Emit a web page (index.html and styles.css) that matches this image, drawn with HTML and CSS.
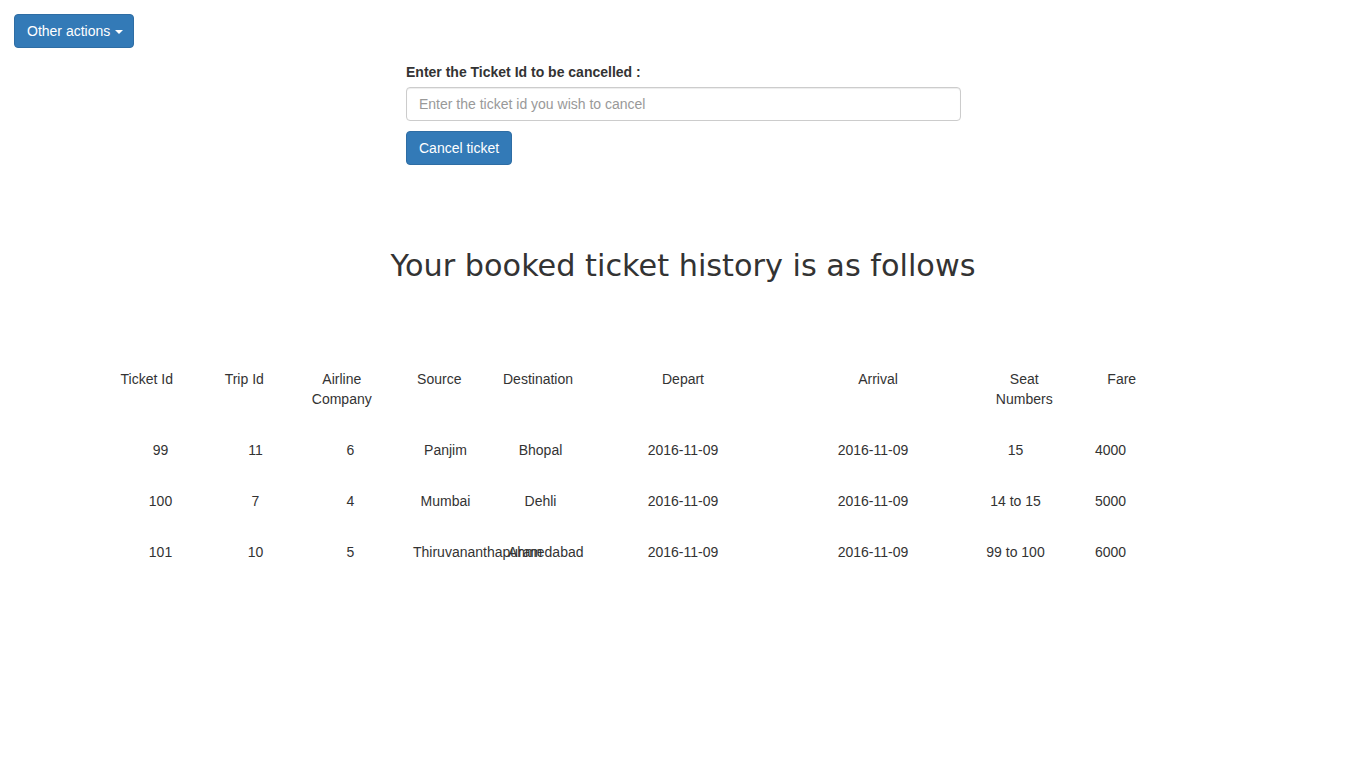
FILE: index.html
```html
<!DOCTYPE html>
<html>
<head>
<meta charset="utf-8">
<title>Ticket history</title>
<link rel="stylesheet" href="styles.css">
</head>
<body>
<div class="topbar">
  <button class="btn btn-primary btn-dropdown" type="button">Other actions <span class="caret"></span></button>
</div>

<form class="cancel-form">
  <label class="form-label" for="tid">Enter the Ticket Id to be cancelled :</label>
  <input class="form-control" id="tid" type="text" placeholder="Enter the ticket id you wish to cancel">
  <div class="form-actions">
    <button class="btn btn-primary" type="button">Cancel ticket</button>
  </div>
</form>

<h2 class="history-title">Your booked ticket history is as follows</h2>

<div class="history">
  <div class="row head">
    <div class="c1">Ticket Id</div>
    <div class="c1">Trip Id</div>
    <div class="c1">Airline Company</div>
    <div class="c1">Source</div>
    <div class="c1">Destination</div>
    <div class="c2">Depart</div>
    <div class="c2">Arrival</div>
    <div class="c1">Seat Numbers</div>
    <div class="c1">Fare</div>
  </div>
  <div class="row data">
    <div class="c1">99</div>
    <div class="c1">11</div>
    <div class="c1">6</div>
    <div class="c1">Panjim</div>
    <div class="c1">Bhopal</div>
    <div class="c2">2016-11-09</div>
    <div class="c2">2016-11-09</div>
    <div class="c1">15</div>
    <div class="c1">4000</div>
  </div>
  <div class="row data">
    <div class="c1">100</div>
    <div class="c1">7</div>
    <div class="c1">4</div>
    <div class="c1">Mumbai</div>
    <div class="c1">Dehli</div>
    <div class="c2">2016-11-09</div>
    <div class="c2">2016-11-09</div>
    <div class="c1">14 to 15</div>
    <div class="c1">5000</div>
  </div>
  <div class="row data">
    <div class="c1">101</div>
    <div class="c1">10</div>
    <div class="c1">5</div>
    <div class="c1">Thiruvananthapuram</div>
    <div class="c1">Ahmedabad</div>
    <div class="c2">2016-11-09</div>
    <div class="c2">2016-11-09</div>
    <div class="c1">99 to 100</div>
    <div class="c1">6000</div>
  </div>
</div>
</body>
</html>
```

FILE: styles.css
```css
* { box-sizing: border-box; }

body {
  margin: 0;
  font-family: "Liberation Sans", Arial, sans-serif;
  font-size: 14px;
  line-height: 20px;
  color: #333;
  background: #fff;
}

.topbar {
  padding: 14px 0 0 14px;
}

.btn {
  display: inline-block;
  height: 34px;
  padding: 6px 12px;
  font-family: inherit;
  font-size: 14px;
  line-height: 20px;
  border: 1px solid transparent;
  border-radius: 4px;
  cursor: pointer;
  white-space: nowrap;
}

.btn-dropdown {
  padding-right: 10px;
}

.btn-primary {
  color: #fff;
  background-color: #337ab7;
  border-color: #2e6da4;
}

.caret {
  display: inline-block;
  width: 0;
  height: 0;
  margin-left: 1px;
  vertical-align: middle;
  border-top: 4px solid #fff;
  border-right: 4px solid transparent;
  border-left: 4px solid transparent;
}

.cancel-form {
  margin: 14px 0 0 406px;
  width: 555px;
  display: flex;
  flex-direction: column;
  align-items: flex-start;
}

.form-label {
  font-weight: bold;
  margin-bottom: 5px;
}

.form-control {
  width: 555px;
  height: 34px;
  padding: 6px 12px;
  font-family: inherit;
  font-size: 14px;
  line-height: 20px;
  color: #555;
  background: #fff;
  border: 1px solid #ccc;
  border-radius: 4px;
  box-shadow: inset 0 1px 1px rgba(0, 0, 0, .075);
}

.form-control::placeholder {
  color: #999;
}

.form-actions {
  margin-top: 10px;
}

.history-title {
  margin: 84px 0 0;
  font-family: "DejaVu Sans", sans-serif;
  font-size: 30.3px;
  font-weight: 500;
  line-height: 33px;
  text-align: center;
  color: #333;
  padding-left: 4px;
}

.history {
  margin-top: 87px;
  display: flex;
  flex-direction: column;
  gap: 31px;
}

.row {
  display: flex;
}

.row > div {
  flex: none;
  padding: 0 15px;
  text-align: center;
}

.head {
  margin-left: 98px;
}
.head .c1 { width: 97.5px; }
.head .c2 { width: 195px; }

.data {
  margin-left: 113px;
}
.data .c1 { width: 95px; }
.data .c2 { width: 190px; }
```
